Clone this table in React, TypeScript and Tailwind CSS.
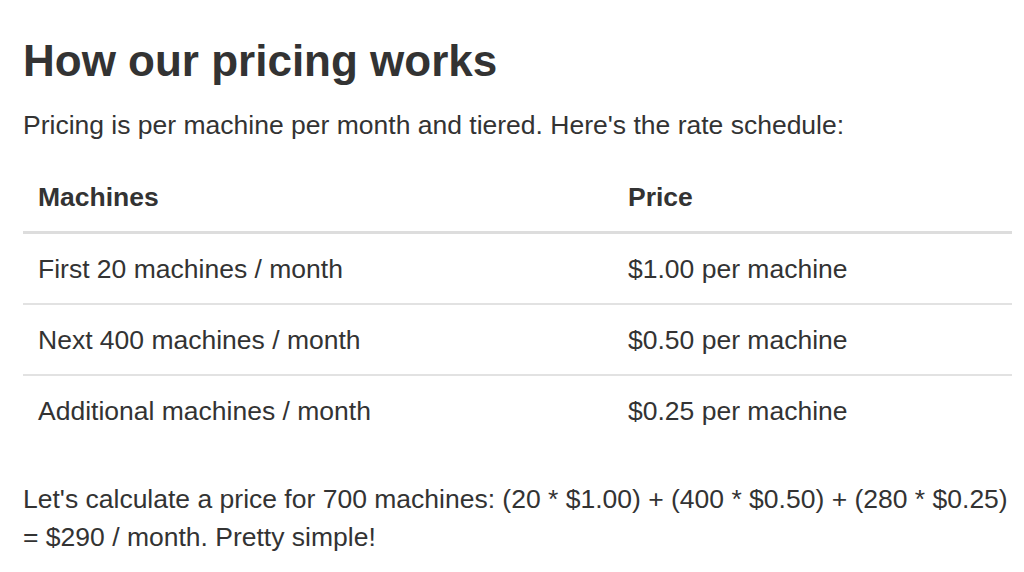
import React from 'react';

type Tier = { machines: string; price: string };

const tiers: Tier[] = [
  { machines: 'First 20 machines / month', price: '$1.00 per machine' },
  { machines: 'Next 400 machines / month', price: '$0.50 per machine' },
  { machines: 'Additional machines / month', price: '$0.25 per machine' },
];

const App: React.FC = () => {
  return (
    <div className="min-h-screen bg-white pl-[23px] pr-[12px] pt-[37px] text-[#333] font-['Liberation_Sans',Arial,sans-serif]">
      {/* Heading + intro */}
      <h2 className="text-[44px] leading-[48px] font-bold">How our pricing works</h2>
      <p className="mt-[21px] text-[26.5px] leading-[38px]">
        Pricing is per machine per month and tiered. Here's the rate schedule:
      </p>

      {/* Rate schedule */}
      <table className="mt-[18px] w-full text-[26.5px] leading-[38px]">
        <thead>
          <tr>
            <th className="w-[590px] px-[15px] py-[15.5px] text-left font-bold border-b-[3px] border-[#ddd]">
              Machines
            </th>
            <th className="px-[15px] py-[15.5px] text-left font-bold border-b-[3px] border-[#ddd]">
              Price
            </th>
          </tr>
        </thead>
        <tbody>
          {tiers.map((t, idx) => (
            <tr key={t.machines} className={idx > 0 ? 'border-t-2 border-[#e2e2e2]' : ''}>
              <td className="px-[15px] py-[15.5px]">{t.machines}</td>
              <td className="px-[15px] py-[15.5px]">{t.price}</td>
            </tr>
          ))}
        </tbody>
      </table>

      <p className="mt-[35px] text-[26.5px] leading-[38px]">
        Let's calculate a price for 700 machines: (20 * $1.00) + (400 * $0.50) + (280 * $0.25) = $290 /
        month. Pretty simple!
      </p>
    </div>
  );
};

export default App;
